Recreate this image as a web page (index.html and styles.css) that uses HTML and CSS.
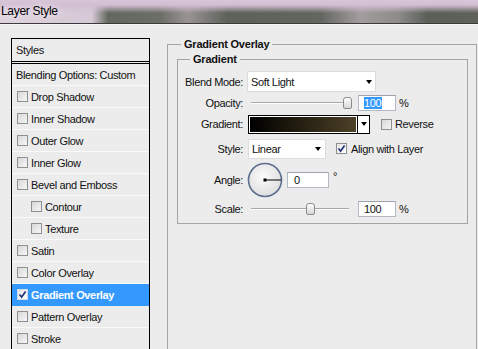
FILE: index.html
```html
<!DOCTYPE html>
<html>
<head>
    <meta charset="UTF-8" />
    <title>Layer Style</title>
    <link rel="stylesheet" href="styles.css">
</head>
<body>
<div class="window">
    <div class="titlebar"><span class="title">Layer Style</span></div>

    <div class="dialog">
        <ul class="styles">
            <li class="styles-head">Styles</li>
            <li class="styles-blend">Blending Options: Custom</li>
            <li><span class="check"></span>Drop Shadow</li>
            <li><span class="check"></span>Inner Shadow</li>
            <li><span class="check"></span>Outer Glow</li>
            <li><span class="check"></span>Inner Glow</li>
            <li><span class="check"></span>Bevel and Emboss</li>
            <li class="sub"><span class="check"></span>Contour</li>
            <li class="sub"><span class="check"></span>Texture</li>
            <li><span class="check"></span>Satin</li>
            <li><span class="check"></span>Color Overlay</li>
            <li class="selected">
                <span class="check on"><svg width="9" height="9" viewBox="0 0 9 9"><path d="M1.5 4.5 L3.6 7 L7.6 1.5" fill="none" stroke="#23357a" stroke-width="1.7"/></svg></span>Gradient Overlay
            </li>
            <li><span class="check"></span>Pattern Overlay</li>
            <li><span class="check"></span>Stroke</li>
        </ul>

        <fieldset class="group overlay">
            <legend>Gradient Overlay</legend>
            <fieldset class="group gradient">
                <legend>Gradient</legend>

                <div class="row row-blend">
                    <span class="label">Blend Mode:</span>
                    <div class="select select-blend">Soft Light<span class="arrow"></span></div>
                </div>

                <div class="row row-opacity">
                    <span class="label">Opacity:</span>
                    <div class="slider"><div class="track"></div><div class="thumb" style="left: 95px"></div></div>
                    <div class="field"><span class="picked">100</span></div>
                    <span class="unit">%</span>
                </div>

                <div class="row row-gradient">
                    <span class="label">Gradient:</span>
                    <div class="swatch"><div class="ramp"></div></div>
                    <div class="swatch-menu"><span class="arrow"></span></div>
                    <span class="check option"></span><span>Reverse</span>
                </div>

                <div class="row row-style">
                    <span class="label">Style:</span>
                    <div class="select select-style">Linear<span class="arrow"></span></div>
                    <span class="check on option wide"><svg width="9" height="9" viewBox="0 0 9 9"><path d="M1.5 4.5 L3.6 7 L7.6 1.5" fill="none" stroke="#23357a" stroke-width="1.7"/></svg></span><span>Align with Layer</span>
                </div>

                <div class="row row-angle">
                    <span class="label">Angle:</span>
                    <svg class="dial" width="36" height="36" viewBox="0 0 36 36">
                        <defs>
                            <radialGradient id="dialfill" cx="45%" cy="40%" r="65%">
                                <stop offset="0" stop-color="#fbfbfb"/>
                                <stop offset="1" stop-color="#dcdcdc"/>
                            </radialGradient>
                        </defs>
                        <circle cx="18" cy="18" r="16.5" fill="url(#dialfill)" stroke="#5d6d8f" stroke-width="1.6"/>
                        <line x1="18" y1="18" x2="34" y2="18" stroke="#000" stroke-width="1"/>
                        <rect x="16.5" y="16.5" width="3" height="3" fill="#000"/>
                    </svg>
                    <div class="field field-angle">0</div>
                    <span class="degree">°</span>
                </div>

                <div class="row row-scale">
                    <span class="label">Scale:</span>
                    <div class="slider"><div class="track"></div><div class="thumb" style="left: 58px"></div></div>
                    <div class="field">100</div>
                    <span class="unit">%</span>
                </div>
            </fieldset>
        </fieldset>
    </div>
</div>
</body>
</html>
```

FILE: styles.css
```css
* {
    margin : 0px;
    padding : 0px;
    box-sizing : border-box;
}

body {
    font-family : "Liberation Sans", Arial, sans-serif;
    font-size : 11px;
    letter-spacing : -0.35px;
    color : #111;
    background-color : #ececec;
}

.window {
    width : 478px;
    height : 349px;
    overflow : hidden;
    background-color : #ececec;
}

/* title bar, blurred glass behind */
.titlebar {
    height : 24px;
    padding-left : 1px;
    border-bottom : 1px solid #3a3a3a;
    background :
        linear-gradient(to bottom, #d7c6d7 0px, #d2bfd2 5px, rgba(210, 191, 210, 0) 13px),
        linear-gradient(to right, #ddd2dd 0px, #d6c8d6 92px, #63685f 108px, #6b6e66 160px, #9a9394 188px, #5c6159 228px, #62665f 320px, #a39c9e 360px, #8d8c88 398px, #5a5f58 428px, #5e6259 478px);
    box-shadow : 0 1px 0 #f7f7f7;
}

.title {
    display : inline-block;
    font-size : 12px;
    letter-spacing : -0.3px;
    line-height : 22px;
    color : #000;
    text-shadow : 0 0 6px #f0e8f0, 0 0 10px #f0e8f0;
}

.dialog {
    display : flex;
    align-items : flex-start;
    padding : 14px 0 0 11px;
}

/* styles list */
ul.styles {
    list-style : none;
    width : 139px;
    flex : none;
    border : 1px solid #000;
    border-bottom : none;
}

ul.styles > li {
    display : flex;
    align-items : center;
    gap : 3px;
    height : 22px;
    padding-left : 5px;
    border-bottom : 1px solid #f9f9f9;
}

ul.styles > li.styles-head {
    height : 25px;
    padding-left : 4px;
    padding-bottom : 1px;
    border-bottom : 3px double #000;
}

ul.styles > li.styles-blend { padding-left : 4px; }

ul.styles > li.sub { padding-left : 19px; }

ul.styles > li.selected {
    background-color : #3399ff;
    color : #fff;
    font-weight : bold;
    border-bottom-color : #3399ff;
}

.check {
    display : inline-flex;
    align-items : center;
    justify-content : center;
    width : 11px;
    height : 11px;
    flex : none;
    border : 1px solid #8e8f8f;
    background : linear-gradient(135deg, #d8d8d8, #f6f6f6);
}

.check.on { background : linear-gradient(135deg, #e4e4e4, #ffffff); }

.selected .check.on { border-color : #d0d7e8; }

/* fieldsets */
fieldset.group {
    border : 1px solid #a4a4a4;
}

fieldset.group > legend {
    font-weight : bold;
    letter-spacing : -0.2px;
    line-height : 13px;
    padding : 0 3px;
}

fieldset.overlay {
    width : 310px;
    height : 330px;
    margin-left : 17px;
    padding : 2px 8px 0 9px;
}

fieldset.overlay > legend { margin-left : 4px; }

fieldset.gradient {
    width : 291px;
    padding : 4px 0 3px 0;
}

fieldset.gradient > legend { margin-left : 12px; }

/* rows */
.row {
    display : flex;
    align-items : center;
}

.row-blend { height : 23px; }
.row-opacity { height : 20px; }
.row-gradient { height : 22px; }
.row-style { height : 27px; }
.row-angle { height : 36px; }
.row-scale { height : 22px; }

.label {
    width : 65px;
    flex : none;
    text-align : right;
    margin-right : 4px;
}

.select {
    display : flex;
    align-items : center;
    justify-content : space-between;
    height : 21px;
    padding : 0 3px 0 3px;
    background-color : #fff;
    border : 1px solid #dcdcdc;
}

.select-blend { width : 129px; }

.select-style {
    width : 78px;
    height : 20px;
    margin-left : 1px;
    padding-right : 4px;
}

.arrow {
    width : 0;
    height : 0;
    border-left : 3.5px solid transparent;
    border-right : 3.5px solid transparent;
    border-top : 4px solid #000;
}

/* sliders */
.slider {
    position : relative;
    width : 108px;
    height : 14px;
    margin-left : 1px;
}

.track {
    margin : 6px 0 0 3px;
    width : 98px;
    height : 2px;
    border-top : 1px solid #a8a8a8;
    border-bottom : 1px solid #fdfdfd;
}

.thumb {
    position : absolute;
    top : 1px;
    width : 9px;
    height : 12px;
    border : 1px solid #8a8a8a;
    border-radius : 3px 3px 2px 2px;
    background : linear-gradient(to bottom, #ffffff, #d6d6d6);
}

.field {
    width : 38px;
    height : 16px;
    margin-left : 2px;
    padding-left : 5px;
    line-height : 14px;
    background-color : #fff;
    border : 1px solid #b3b8c2;
    border-top-color : #9ea3ad;
}

.field .picked {
    display : inline-block;
    background-color : #3399ff;
    color : #fff;
    line-height : 12px;
    padding-right : 1px;
}

.unit { margin-left : 3px; }

/* gradient swatch */
.swatch {
    width : 110px;
    height : 19px;
    margin-left : 1px;
    padding : 1px;
    border : 1px solid #000;
    background-color : #fff;
}

.ramp {
    height : 100%;
    background : linear-gradient(to right, #000000, #1e1a0e 40%, #4d4128);
}

.swatch-menu {
    display : flex;
    align-items : center;
    justify-content : center;
    width : 13px;
    height : 19px;
    margin-left : -1px;
    background-color : #fff;
    border : 1px solid #000;
}

.check.option {
    margin-left : 11px;
    margin-right : 3px;
}

.check.option.wide {
    margin-left : 10px;
    margin-right : 4px;
}

/* angle */
.dial { margin-left : 0px; flex : none; }

.field-angle {
    width : 42px;
    margin-left : 4px;
    padding-left : 6px;
}

.degree {
    margin-left : 4px;
    margin-top : -8px;
}
```
